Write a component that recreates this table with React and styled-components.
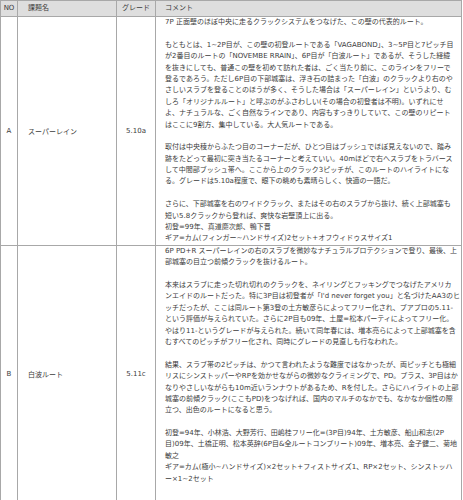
import React from "react";
import styled, { createGlobalStyle } from "styled-components";

const GlobalStyle = createGlobalStyle`
  html, body { margin: 0; padding: 0; background: #fff; }
  body { font-family: "DejaVu Sans", "Noto Sans CJK JP", sans-serif; }
`;

const FONT = `"DejaVu Sans", "Noto Sans CJK JP", sans-serif`;
const LINE = 11.4;

const Table = styled.table`
  border-collapse: collapse;
  table-layout: fixed;
  width: 462px;
  font-family: ${FONT};
  font-size: 7px;
  color: #3c3c3c;
`;

const HeadCell = styled.th`
  background: #dedede;
  border: 1px solid #a8a8a8;
  height: 15px;
  padding: 0 0 0 ${(p) => p.$pad || 0}px;
  text-align: ${(p) => p.$align || "left"};
  font-weight: normal;
  line-height: 15px;
  color: #3c3c3c;
  white-space: nowrap;
`;

const Cell = styled.td`
  border: 1px solid #a8a8a8;
  padding: 0 0 0 ${(p) => p.$pad || 0}px;
  text-align: ${(p) => p.$align || "left"};
  vertical-align: middle;
  white-space: nowrap;
`;

const CommentCell = styled.td`
  border: 1px solid #a8a8a8;
  padding: 0 0 ${(p) => p.$tail || 0}px 9px;
  vertical-align: top;
  line-height: ${LINE}px;
`;

const Paragraph = styled.div`
  & + & {
    margin-top: ${LINE}px;
  }
`;

const Line = styled.span`
  display: block;
  white-space: nowrap;
  height: ${LINE}px;
`;

const routes = [
  {
    no: "A",
    name: "スーパーレイン",
    grade: "5.10a",
    tail: 0,
    paragraphs: [
      ["7P 正面壁のほぼ中央に走るクラックシステムをつなげた、この壁の代表的ルート。"],
      [
        "もともとは、1~2P目が、この壁の初登ルートである「VAGABOND」、3~5P目と7ピッチ目",
        "が2番目のルートの「NOVEMBE RRAIN」、6P目が「白波ルート」であるが、そうした経緯",
        "を抜きにしても、普通この壁を初めて訪れた者は、ごく当たり前に、このラインをフリーで",
        "登るであろう。ただし6P目の下部城塞は、浮き石の詰まった「白波」のクラックより右のや",
        "さしいスラブを登ることのほうが多く、そうした場合は「スーパーレイン」というより、む",
        "しろ「オリジナルルート」と呼ぶのがふさわしい(その場合の初登者は不明)。いずれにせ",
        "よ、ナチュラルな、ごく自然なラインであり、内容もすっきりしていて、この壁のリピート",
        "はここに9割方、集中している。大人気ルートである。",
      ],
      [
        "取付は中央稜からふたつ目のコーナーだが、ひとつ目はブッシュでほぼ見えないので、踏み",
        "跡をたどって最初に突き当たるコーナーと考えていい。40mほどで右へスラブをトラバース",
        "して中間部ブッシュ帯へ。ここから上のクラック3ピッチが、このルートのハイライトにな",
        "る。グレードは5.10a程度で、眼下の眺めも素晴らしく、快適の一語だ。",
      ],
      [
        "さらに、下部城塞を右のワイドクラック、またはその右のスラブから抜け、続く上部城塞も",
        "短い5.8クラックから登れば、爽快な岩壁頂上に出る。",
        "初登=99年、真道慶次郎、鴨下晋",
        "ギア=カム(フィンガー~ハンドサイズ)2セット+オフウィドゥスサイズ1",
      ],
    ],
  },
  {
    no: "B",
    name: "白波ルート",
    grade: "5.11c",
    tail: 18,
    paragraphs: [
      [
        "6P PD+R スーパーレインの右のスラブを微妙なナチュラルプロテクションで登り、最後、上",
        "部城塞の目立つ前傾クラックを抜けるルート。",
      ],
      [
        "本来はスラブに走った切れ切れのクラックを、ネイリングとフッキングでつなげたアメリカ",
        "ンエイドのルートだった。特に3P目は初登者が「I'd never forget you」と名づけたAA3のヒ",
        "ッチだったが、ここは同ルート第3登の土方敏彦らによってフリー化され、プアプロの5.11-",
        "という評価が与えられていた。さらに2P目も09年、土屋=松本パーティによってフリー化。",
        "やはり11-というグレードが与えられた。続いて同年春には、増本亮らによって上部城塞を含",
        "むすべてのピッチがフリー化され、同時にグレードの見直しも行なわれた。",
      ],
      [
        "結果、スラブ帯の2ピッチは、かつて言われたような難度ではなかったが、両ピッチとも極細",
        "リスにシンストッパーやRPを効かせながらの微妙なクライミングで、PD。プラス、3P目はか",
        "なりやさしいながらも10m近いランナウトがあるため、Rを付した。さらにハイライトの上部",
        "城塞の前傾クラック(ここもPD)をつなげれば、国内のマルチのなかでも、なかなか個性の際",
        "立つ、出色のルートになると思う。",
      ],
      [
        "初登=94年、小林浩、大野芳行、田嶋桂フリー化=(3P目)94年、土方敏彦、船山和志(2P",
        "目)09年、土橋正明、松本英辞(6P目&全ルートコンプリート)09年、増本亮、金子健二、菊地",
        "敏之",
        "ギア=カム(極小~ハンドサイズ)×2セット+フィストサイズ1、RP×2セット、シンストッハ",
        "ー×1~2セット",
      ],
    ],
  },
];

export default function App() {
  return (
    <>
      <GlobalStyle />
      <Table>
        <colgroup>
          <col style={{ width: 17 }} />
          <col style={{ width: 99 }} />
          <col style={{ width: 39 }} />
          <col />
        </colgroup>
        <thead>
          <tr>
            <HeadCell $align="center">NO</HeadCell>
            <HeadCell $pad={10}>課題名</HeadCell>
            <HeadCell $align="center">グレード</HeadCell>
            <HeadCell $pad={9}>コメント</HeadCell>
          </tr>
        </thead>
        <tbody>
          {routes.map((r) => (
            <tr key={r.no}>
              <Cell $align="center">{r.no}</Cell>
              <Cell $pad={10}>{r.name}</Cell>
              <Cell $align="center">{r.grade}</Cell>
              <CommentCell $tail={r.tail}>
                {r.paragraphs.map((lines, i) => (
                  <Paragraph key={i}>
                    {lines.map((l, j) => (
                      <Line key={j}>{l}</Line>
                    ))}
                  </Paragraph>
                ))}
              </CommentCell>
            </tr>
          ))}
        </tbody>
      </Table>
    </>
  );
}
